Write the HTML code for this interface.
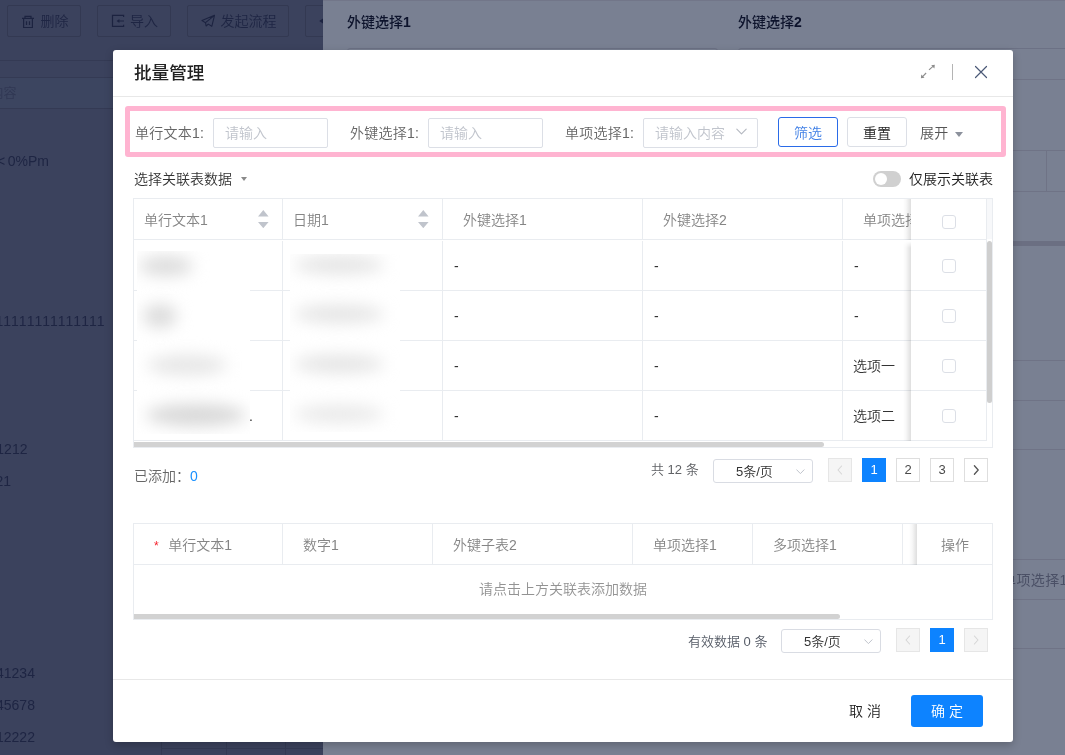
<!DOCTYPE html>
<html lang="zh-CN">
<head>
<meta charset="utf-8">
<title>批量管理</title>
<style>
*{box-sizing:border-box;margin:0;padding:0}
html,body{width:1065px;height:755px;overflow:hidden}
body{position:relative;font-kerning:none;font-weight:350;background:#3b425d;font-family:"Liberation Sans","Noto Sans CJK SC",sans-serif;font-size:14px;color:#333;-webkit-font-smoothing:antialiased}
.abs{position:absolute}
.t,.lt,.dt,.th,.td,.lbl,.inp span,.btn,.pg,.sel span,.ok{opacity:.999}
.t{position:absolute;white-space:nowrap;line-height:20px}
/* background left */
.bgbtn{position:absolute;top:5px;height:32px;border:1px solid #333952;border-radius:2px;color:#1e2543}
.bgbtn .t{top:5px}
.hl{position:absolute;height:1px;background:#343a54}
.lt{position:absolute;white-space:nowrap;line-height:20px;color:#1e2543;font-size:14px}
/* right drawer */
#drawer{position:absolute;left:323px;top:0;width:742px;height:755px;background:#798092;overflow:hidden}
#drawer .dl{position:absolute;height:1px;background:#6f7386}
#drawer .dt{position:absolute;white-space:nowrap;line-height:20px;color:#0d132c;font-weight:500;font-size:14px}
/* modal */
#modal{position:absolute;left:113px;top:50px;width:900px;height:692px;background:#fff;border-radius:3px;box-shadow:0 3px 8px rgba(0,0,0,.22)}
#modal .m{position:absolute}

#modal .lbl{position:absolute;top:73px;line-height:20px;color:#666;white-space:nowrap;letter-spacing:.25px}
#modal .inp{position:absolute;top:68px;height:30px;border:1px solid #dcdfe6;border-radius:2px;background:#fff}
#modal .inp span{position:absolute;left:11px;top:4px;line-height:20px;color:#c0c4cc;white-space:nowrap}
.btn{position:absolute;height:30px;border:1px solid #dcdfe6;border-radius:3px;text-align:center;line-height:31px;background:#fff}
/* tables: coordinates relative to modal (modal left=113, top=50) */
.vl{position:absolute;width:1px;background:#e9ecf0}
.hz{position:absolute;height:1px;background:#e9ecf0}
.th{position:absolute;line-height:20px;color:#858585;white-space:nowrap}
.td{position:absolute;line-height:20px;color:#333;white-space:nowrap}
.cb{position:absolute;width:14px;height:14px;border:1px solid #dcdfe6;border-radius:3px;background:#fff}
.pg{position:absolute;width:24px;height:24px;border:1px solid #dedede;border-radius:0;background:#fff;text-align:center;line-height:22px;font-size:13px;color:#4a4a4a}
.pg.dis{background:#f5f5f5;border-color:#e6e6e6}
.pg.act{background:#0d83ff;border-color:#0d83ff;color:#fff}
.sel{position:absolute;width:100px;height:24px;border:1px solid #d9dce3;border-radius:3px;background:#fff}
.sel span{position:absolute;left:22px;top:1px;line-height:22px;font-size:13px;color:#333;white-space:nowrap}
.blur{position:absolute;background:#dcdcdc;border-radius:50%;filter:blur(8px)}
.shd{background:linear-gradient(to right,rgba(0,0,0,0),rgba(0,0,0,.03) 40%,rgba(0,0,0,.13))}
.sort{position:absolute;width:11px;height:17px}
</style>
</head>
<body>
<!-- left background -->
<div class="bgbtn" style="left:7px;width:74px"><span class="t" style="left:32.5px">删除</span></div>
<div class="bgbtn" style="left:97px;width:74px"><span class="t" style="left:32px">导入</span></div>
<div class="bgbtn" style="left:187px;width:102px"><span class="t" style="left:32.5px">发起流程</span></div>
<div class="bgbtn" style="left:305px;width:60px"></div>
<svg class="abs" style="left:0;top:0" width="323" height="45" viewBox="0 0 323 45" fill="none" stroke="#1c2340" stroke-width="1.2" stroke-linejoin="miter">
  <!-- trash -->
  <path d="M22 18.3 H34 M25 18.2 V16.3 H31 V18.2 M23.6 18.4 V27.5 H32.4 V18.4 M26.5 21.2 V25 M29.5 21.2 V25"/>
  <!-- import -->
  <path d="M123.6 17 V15.4 H112.5 V26.4 H123.6 V24.8 M118 21 H124"/>
  <path d="M116.6 21 L119.4 19 V23 Z" fill="#1c2340" stroke="none"/>
  <!-- plane -->
  <path d="M214.5 15.3 L202 20.6 L205.5 22.7 L206.1 26 L208.3 24.1 L211.8 26.3 Z M214.5 15.3 L205.5 22.7" stroke-width="1.1" stroke-linejoin="round"/>
  <!-- 4th btn arrow -->
  <path d="M319.2 21 L323 18.6 V23.6 Z" fill="#1c2340" stroke="none"/>
</svg>
<div class="hl" style="left:0;top:60px;width:323px"></div>
<div class="abs" style="left:0;top:78px;width:323px;height:30px;background:#3c4560"></div>
<div class="hl" style="left:0;top:77px;width:323px"></div>
<div class="hl" style="left:0;top:108px;width:323px"></div>
<span class="lt" style="left:-9.5px;top:83px;color:#303753;font-size:13px">内容</span>
<span class="lt" style="left:-3px;top:151px"><span style="margin-right:2.5px">&lt;</span>0%Pm</span>
<span class="lt" style="left:-4.5px;top:311px">11111111111111</span>
<span class="lt" style="left:-3.7px;top:439px">1212</span>
<span class="lt" style="left:-4.6px;top:471px">21</span>
<span class="lt" style="left:-4px;top:663px">41234</span>
<span class="lt" style="left:-4px;top:695px">45678</span>
<span class="lt" style="left:-4px;top:727px">12222</span>

<div class="hl" style="left:161px;top:748px;width:162px"></div>
<div class="hl" style="left:161px;top:742px;width:1px;height:13px"></div>
<div class="hl" style="left:226px;top:742px;width:1px;height:13px"></div>
<div class="hl" style="left:285px;top:742px;width:1px;height:13px"></div>
<div id="drawer">
  <div class="dl" style="left:0;top:0;width:742px;background:#727689"></div>
  <span class="dt" style="left:24px;top:11.5px">外键选择<b>1</b></span>
  <span class="dt" style="left:415px;top:11.5px">外键选择<b>2</b></span>
  <div class="abs" style="left:24px;top:48px;width:371px;height:32px;border:1px solid #6c7185;border-radius:3px"></div>
  <div class="abs" style="left:415px;top:48px;width:371px;height:32px;border:1px solid #6c7185;border-radius:3px"></div>
  <div class="dl" style="left:690px;top:79px;width:52px"></div>
  <div class="dl" style="left:690px;top:150px;width:52px"></div>
  <div class="dl" style="left:690px;top:191px;width:52px"></div>
  <div class="dl" style="left:723px;top:150px;width:1px;height:41px"></div>
  <div class="dl" style="left:690px;top:241px;width:52px;height:5px;background:#6b6f82"></div>
  <div class="dl" style="left:690px;top:360px;width:52px"></div>
  <div class="dl" style="left:690px;top:400px;width:52px"></div>
  <div class="dl" style="left:690px;top:449px;width:52px"></div>
  <div class="dl" style="left:690px;top:559px;width:52px"></div>
  <div class="dl" style="left:690px;top:599px;width:52px"></div>
  <div class="dl" style="left:690px;top:648px;width:52px"></div>
  <span class="dt" style="left:679px;top:570px;font-weight:normal;color:#4b5066;letter-spacing:.4px">单项选择1</span>
</div>

<div id="modal">
  <span class="t" style="left:21px;top:11px;font-size:17.6px;font-weight:500;color:#222;line-height:24px">批量管理</span>
  <div class="m" style="left:0;top:46px;width:900px;height:1px;background:#e8e8e8"></div>

  <!-- header icons -->
  <svg class="m" style="left:805px;top:12px" width="20" height="20" viewBox="0 0 20 20" fill="#8c8c8c" stroke="#8c8c8c" stroke-width="1.1" stroke-linecap="butt">
    <path d="M11 7.9 L15 4.3" fill="none"/><path d="M16.8 2.8 L13.2 3.2 L16.4 6.4 Z" stroke="none"/>
    <path d="M8.1 11 L4.6 14.7" fill="none"/><path d="M2.9 16.2 L3.3 12.6 L6.5 15.8 Z" stroke="none"/>
  </svg>
  <div class="m" style="left:839px;top:14px;width:1px;height:16px;background:#b4b4b4"></div>
  <svg class="m" style="left:861px;top:15px" width="14" height="14" viewBox="0 0 14 14" fill="none" stroke="#4a5876" stroke-width="1.2" stroke-linecap="round">
    <path d="M1.5 1.5 L12.5 12.5 M12.5 1.5 L1.5 12.5"/>
  </svg>

  <!-- filter bar -->
  <div class="m" style="left:12px;top:56px;width:881px;height:51px;border:5px solid #ffb4d1;border-radius:3px"></div>
  <span class="lbl" style="left:22px">单行文本1:</span>
  <div class="inp" style="left:100px;width:115px"><span>请输入</span></div>
  <span class="lbl" style="left:237px">外键选择1:</span>
  <div class="inp" style="left:315px;width:115px"><span>请输入</span></div>
  <span class="lbl" style="left:452px">单项选择1:</span>
  <div class="inp" style="left:530px;width:115px"><span>请输入内容</span>
    <svg style="position:absolute;left:92px;top:8.5px" width="11" height="7.5" viewBox="0 0 11 7.5" fill="none" stroke="#b4b8c0" stroke-width="1.1" stroke-linecap="round" stroke-linejoin="round"><path d="M.8 1.2 L5.5 5.9 L10.2 1.2"/></svg>
  </div>
  <div class="btn" style="left:665px;top:67px;width:60px;border:1px solid #2a6be8;color:#3f7fe6">筛选</div>
  <div class="btn" style="left:734px;top:67px;width:60px;color:#222">重置</div>
  <span class="lbl" style="left:807px;color:#555">展开</span>
  <div class="m" style="left:842px;top:82px;width:0;height:0;border-left:4.5px solid transparent;border-right:4.5px solid transparent;border-top:5px solid #8c919c"></div>

  <!-- sub title row -->
  <span class="t" style="left:21px;top:119px;color:#333">选择关联表数据</span>
  <div class="m" style="left:128px;top:127px;width:0;height:0;border-left:3.5px solid transparent;border-right:3.5px solid transparent;border-top:4px solid #8a8a8a"></div>
  <div class="m" style="left:760px;top:121px;width:28px;height:16px;border-radius:8px;background:#d0d0d0"></div>
  <div class="m" style="left:762px;top:123px;width:12px;height:12px;border-radius:6px;background:#fff"></div>
  <span class="t" style="left:796px;top:119px;color:#222">仅展示关联表</span>

  <!-- TABLE 1 : modal-relative; page x-113, y-50 -->
  <div id="t1" class="m" style="left:20px;top:148px;width:860px;height:250px;border:1px solid #e9ecf0;overflow:hidden">
    <!-- inside coordinates: page x-134, y-199 -->
    <div class="hz" style="left:0;top:40px;width:853px"></div>
    <div class="hz" style="left:0;top:91px;width:853px"></div>
    <div class="hz" style="left:0;top:141px;width:853px"></div>
    <div class="hz" style="left:0;top:191px;width:853px"></div>
    <div class="hz" style="left:0;top:241px;width:853px"></div>
    <div class="vl" style="left:148px;top:0;height:41px"></div><div class="vl" style="left:148px;top:42px;height:200px"></div>
    <div class="vl" style="left:308px;top:0;height:41px"></div><div class="vl" style="left:308px;top:42px;height:200px"></div>
    <div class="vl" style="left:508px;top:0;height:41px"></div><div class="vl" style="left:508px;top:42px;height:200px"></div>
    <div class="vl" style="left:708px;top:0;height:41px"></div><div class="vl" style="left:708px;top:42px;height:200px"></div>
    <div class="vl" style="left:852px;top:0;height:242px"></div>
    <div class="m" style="left:853px;top:0;width:6px;height:40px;background:#f7f8fa"></div>
    <span class="th" style="left:10px;top:11px">单行文本1</span>
    <span class="th" style="left:159px;top:11px">日期1</span>
    <span class="th" style="left:329px;top:11px">外键选择1</span>
    <span class="th" style="left:529px;top:11px">外键选择2</span>
    <span class="th" style="left:729px;top:11px">单项选择1</span>
    <svg class="sort" style="left:124.4px;top:11px;width:10.6px;height:18.2px" viewBox="0 0 10.6 18.2"><path d="M5.3 0 L10.6 6.4 H0 Z M0 12 H10.6 L5.3 18.2 Z" fill="#c0c4cc"/></svg>
    <svg class="sort" style="left:284.4px;top:11px;width:10.6px;height:18.2px" viewBox="0 0 10.6 18.2"><path d="M5.3 0 L10.6 6.4 H0 Z M0 12 H10.6 L5.3 18.2 Z" fill="#c0c4cc"/></svg>
    <!-- dashes -->
    <span class="td" style="left:320px;top:57px">-</span><span class="td" style="left:520px;top:57px">-</span><span class="td" style="left:720px;top:57px">-</span>
    <span class="td" style="left:320px;top:107px">-</span><span class="td" style="left:520px;top:107px">-</span><span class="td" style="left:720px;top:107px">-</span>
    <span class="td" style="left:320px;top:157px">-</span><span class="td" style="left:520px;top:157px">-</span><span class="td" style="left:719px;top:157px">选项一</span>
    <span class="td" style="left:320px;top:207px">-</span><span class="td" style="left:520px;top:207px">-</span><span class="td" style="left:719px;top:207px">选项二</span>
    <span class="td" style="left:115px;top:207px">.</span>
    <!-- blurred privacy patches -->
    <div class="m" style="left:3px;top:52px;width:113px;height:183px;background:#fff;overflow:hidden">
      <div class="blur" style="left:2px;top:5px;width:54px;height:20px"></div>
      <div class="blur" style="left:6px;top:53px;width:34px;height:24px"></div>
      <div class="blur" style="left:10px;top:104px;width:80px;height:20px;background:#e6e6e6"></div>
      <div class="blur" style="left:9px;top:153px;width:100px;height:22px;background:#d8d8d8"></div>
    </div>
    <div class="m" style="left:156px;top:55px;width:110px;height:178px;background:#fff;overflow:hidden">
      <div class="blur" style="left:4px;top:2px;width:90px;height:18px;background:#e4e4e4"></div>
      <div class="blur" style="left:4px;top:51px;width:90px;height:18px;background:#e4e4e4"></div>
      <div class="blur" style="left:4px;top:101px;width:90px;height:18px;background:#e4e4e4"></div>
      <div class="blur" style="left:4px;top:151px;width:90px;height:18px;background:#e9e9e9"></div>
    </div>
    <!-- fixed right col -->
    <div class="m" style="left:777px;top:0;width:75px;height:40px;background:#fff"></div>
    <div class="m" style="left:777px;top:42px;width:75px;height:200px;background:#fff"></div>
    <div class="m shd" style="left:769px;top:0;width:8px;height:41px"></div>
    <div class="m shd" style="left:769px;top:42px;width:8px;height:200px;-webkit-mask-image:linear-gradient(to bottom,transparent,#000 7px);mask-image:linear-gradient(to bottom,transparent,#000 7px)"></div>
    <div class="hz" style="left:777px;top:40px;width:76px"></div>
    <div class="hz" style="left:777px;top:91px;width:75px"></div>
    <div class="hz" style="left:777px;top:141px;width:75px"></div>
    <div class="hz" style="left:777px;top:191px;width:75px"></div>
    <div class="hz" style="left:777px;top:241px;width:75px"></div>
    <div class="cb" style="left:808px;top:16px"></div>
    <div class="cb" style="left:808px;top:60px"></div>
    <div class="cb" style="left:808px;top:110px"></div>
    <div class="cb" style="left:808px;top:160px"></div>
    <div class="cb" style="left:808px;top:210px"></div>
    <!-- scrollbars -->
    <div class="m" style="left:853px;top:42px;width:5px;height:162px;background:#cfcfcf;border-radius:3px"></div>
    <div class="m" style="left:0;top:243px;width:690px;height:5px;background:#d2d2d2;border-radius:0 3px 3px 0"></div>
  </div>

  <span class="t" style="left:21px;top:416px;color:#666">已添加：<span style="color:#1890ff">0</span></span>
  <span class="t" style="left:538px;top:410px;color:#606266;font-size:13px">共 12 条</span>
  <div class="sel" style="left:600px;top:409px"><span>5条/页</span>
    <svg style="position:absolute;left:82px;top:8.5px" width="9" height="6" viewBox="0 0 9 6" fill="none" stroke="#c0c4cc" stroke-width="1" stroke-linecap="round"><path d="M.7 .8 L4.4 4.6 L8.1 .8"/></svg>
  </div>
  <div class="pg dis" style="left:715px;top:408px"><svg width="8" height="12" viewBox="0 0 8 12" style="margin-top:5px" fill="none" stroke="#d6d6d6" stroke-width="1.1" stroke-linecap="round" stroke-linejoin="round"><path d="M5.6 2 L2 6 L5.6 10"/></svg></div>
  <div class="pg act" style="left:749px;top:408px">1</div>
  <div class="pg" style="left:783px;top:408px">2</div>
  <div class="pg" style="left:817px;top:408px">3</div>
  <div class="pg" style="left:851px;top:408px"><svg width="8" height="12" viewBox="0 0 8 12" style="margin-top:5px" fill="none" stroke="#555" stroke-width="1.3" stroke-linecap="round" stroke-linejoin="round"><path d="M2.4 1.8 L6.2 6 L2.4 10.2"/></svg></div>

  <!-- TABLE 2 -->
  <div id="t2" class="m" style="left:20px;top:473px;width:860px;height:97px;border:1px solid #e9ecf0;overflow:hidden">
    <!-- inside: page x-134, y-524 -->
    <div class="hz" style="left:0;top:40px;width:858px"></div>
    <div class="vl" style="left:148px;top:0;height:40px"></div>
    <div class="vl" style="left:298px;top:0;height:40px"></div>
    <div class="vl" style="left:498px;top:0;height:40px"></div>
    <div class="vl" style="left:618px;top:0;height:40px"></div>
    <div class="vl" style="left:768px;top:0;height:40px"></div>
    <span class="th" style="left:20px;top:11px"><span style="color:#f5222d;font-size:12px;margin-right:9.5px">*</span>单行文本1</span>
    <span class="th" style="left:169px;top:11px">数字1</span>
    <span class="th" style="left:319px;top:11px">外键子表2</span>
    <span class="th" style="left:519px;top:11px">单项选择1</span>
    <span class="th" style="left:639px;top:11px">多项选择1</span>
    <div class="m" style="left:783px;top:0;width:75px;height:40px;background:#fff"></div>
    <div class="m shd" style="left:775px;top:0;width:8px;height:41px"></div>
    <div class="hz" style="left:783px;top:40px;width:75px"></div>
    <span class="th" style="left:807px;top:11px">操作</span>
    <span class="th" style="left:345px;top:55px;color:#939393">请点击上方关联表添加数据</span>
    <div class="m" style="left:0;top:90px;width:706px;height:5px;background:#d2d2d2;border-radius:0 3px 3px 0"></div>
  </div>

  <span class="t" style="left:575px;top:582px;color:#555b66;font-size:13px">有效数据 0 条</span>
  <div class="sel" style="left:668px;top:579px"><span>5条/页</span>
    <svg style="position:absolute;left:82px;top:8.5px" width="9" height="6" viewBox="0 0 9 6" fill="none" stroke="#c0c4cc" stroke-width="1" stroke-linecap="round"><path d="M.7 .8 L4.4 4.6 L8.1 .8"/></svg>
  </div>
  <div class="pg dis" style="left:783px;top:578px"><svg width="8" height="12" viewBox="0 0 8 12" style="margin-top:5px" fill="none" stroke="#d6d6d6" stroke-width="1.1" stroke-linecap="round" stroke-linejoin="round"><path d="M5.6 2 L2 6 L5.6 10"/></svg></div>
  <div class="pg act" style="left:817px;top:578px">1</div>
  <div class="pg dis" style="left:851px;top:578px"><svg width="8" height="12" viewBox="0 0 8 12" style="margin-top:5px" fill="none" stroke="#d6d6d6" stroke-width="1.1" stroke-linecap="round" stroke-linejoin="round"><path d="M2.4 2 L6 6 L2.4 10"/></svg></div>

  <!-- footer -->
  <div class="m" style="left:0;top:629px;width:900px;height:1px;background:#e8e8e8"></div>
  <span class="t" style="left:736px;top:651px;color:#222">取 消</span>
  <div class="m" style="left:798px;top:645px;width:72px;height:32px;border-radius:3px;background:#0d83ff;color:#fff;text-align:center;line-height:32px"><span class="ok">确 定</span></div>
</div>
</body>
</html>
